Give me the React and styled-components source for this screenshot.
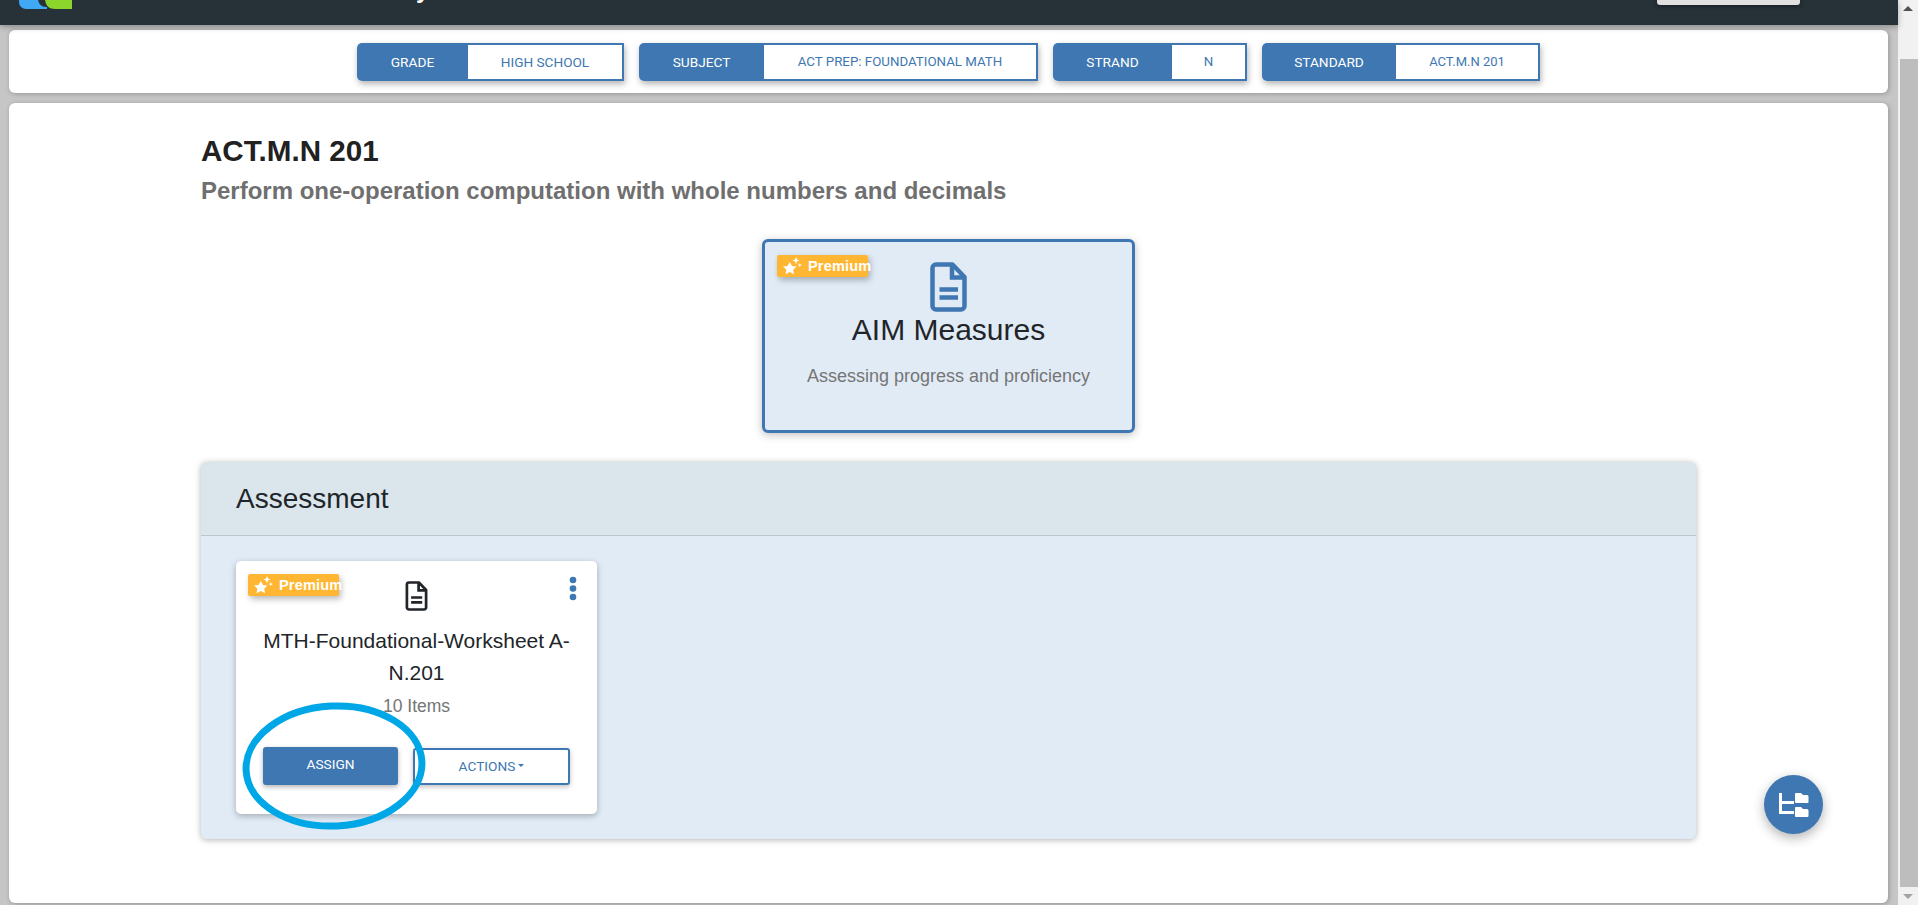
import React from "react";
import styled, { createGlobalStyle } from "styled-components";

const Global = createGlobalStyle`
  html, body { margin: 0; padding: 0; height: 905px; overflow: hidden; background: #c6c6c6; }
  * { box-sizing: border-box; }
  body { font-family: "Liberation Sans", Arial, sans-serif; color: #212529; }
`;

const BLUE = "#3e77b1";

const Shell = styled.div`display: flex; width: 1918px; height: 905px; overflow: hidden;`;
const Page = styled.div`display: flex; flex-direction: column; width: 1898px; height: 905px;`;

const Header = styled.header`
  display: flex; justify-content: space-between; height: 25px; flex: none; background: #263238;
  box-shadow: 0 2px 6px rgba(0,0,0,.3); position: relative; z-index: 2; overflow: hidden;
  padding: 0 98px 0 19px;
`;
const Brand = styled.div`display: flex; align-items: flex-start;`;
const Logo = styled.svg`display: block; width: 54px; height: 9px;`;
const BrandText = styled.span`
  font-size: 24px; line-height: 24px; font-weight: 700; color: #fff; margin: -22px 0 0 343px;
`;
const UserButton = styled.div`
  width: 143px; height: 5px; background: #e0e0e0; border-radius: 0 0 3px 3px;
  box-shadow: 0 1px 4px rgba(0,0,0,.5);
`;

const Content = styled.main`
  flex: 1; min-height: 0; display: flex; flex-direction: column; gap: 10px;
  padding: 5px 10px 2px 9px;
`;
const FilterCard = styled.section`
  flex: none; height: 63px; background: #fff; border-radius: 6px; display: flex; justify-content: center;
  gap: 15px; padding-top: 13px; box-shadow: 1px 1px 5px rgba(0,0,0,.25);
`;
const Filter = styled.div`
  display: flex; height: 38px; box-shadow: 1px 3px 6px rgba(0,0,0,.3); border-radius: 5px 0 0 5px;
  font-family: Roboto, sans-serif; font-weight: 400; text-transform: uppercase;
`;
const FilterLabel = styled.div`
  width: ${p => p.$w}px; background: ${BLUE}; color: #fff; border-radius: 5px 0 0 5px; font-size: 13.7px;
  display: flex; align-items: center; justify-content: center; padding-bottom: 1px;
`;
const FilterValue = styled.div`
  width: ${p => p.$w}px; background: #fff; color: ${BLUE}; border: 2px solid ${BLUE}; border-left: 0;
  font-size: ${p => p.$size}px; display: flex; align-items: center; justify-content: center; padding-bottom: 1px;
`;

const MainCard = styled.section`
  flex: 1; min-height: 0; position: relative; background: #fff; border-radius: 6px;
  padding: 30px 192px 0; box-shadow: 1px 1px 5px rgba(0,0,0,.25);
`;
const Title = styled.h1`margin: 0; font-size: 29.6px; line-height: 36px; font-weight: 700; color: #212121;`;
const Subtitle = styled.h2`
  margin: 7px 0 0; font-size: 24px; line-height: 30px; font-weight: 700; color: #6f6f6f;
`;
const FeatureRow = styled.div`display: flex; justify-content: center; margin-top: 33px;`;
const FeatureCard = styled.article`
  position: relative; width: 373px; height: 194px; background: #e1ebf5; border: 3px solid ${BLUE};
  border-radius: 6px; box-shadow: 0 2px 8px rgba(0,0,0,.25); display: flex; flex-direction: column;
  align-items: center; padding-top: 20px;
`;
const FeatureName = styled.div`font-size: 30px; line-height: 34px; color: #212529; margin-top: 1px;`;
const FeatureText = styled.div`font-size: 18px; line-height: 24px; color: #757575; margin-top: 17px;`;

const Badge = styled.div`
  position: absolute; left: ${p => p.$x}px; top: ${p => p.$y}px; width: 91px; height: 22px;
  background: #ffb733; border-radius: 2px; box-shadow: 2px 3px 6px rgba(0,0,0,.28);
  display: flex; align-items: center; padding-left: 6px; gap: 5px; white-space: nowrap;
  font-size: 14.5px; font-weight: 700; color: #fff; letter-spacing: .2px;
`;
const BadgeIcon = styled.svg`flex: none; width: 20px; height: 18px;`;

const Panel = styled.section`
  margin-top: 29px; height: 377px; background: #e1ebf5; border-radius: 6px;
  box-shadow: 0 1px 6px rgba(0,0,0,.3); display: flex; flex-direction: column;
`;
const PanelHead = styled.div`
  flex: none; height: 74px; background: #dae5ec; border-bottom: 1px solid #b9c5d1; border-radius: 6px 6px 0 0;
  padding: 0 35px; display: flex; align-items: center; font-size: 28px; color: #212529;
`;
const PanelBody = styled.div`padding: 25px 35px;`;

const ItemCard = styled.article`
  position: relative; width: 361px; height: 253px; background: #fff; border-radius: 5px;
  box-shadow: 0 2px 6px rgba(0,0,0,.28); padding: 20px 27px 0; display: flex; flex-direction: column; align-items: center;
`;
const ItemName = styled.div`
  width: 320px; margin-top: 14px; font-size: 21px; line-height: 32px; text-align: center; color: #212529;
`;
const ItemCount = styled.div`font-size: 17.5px; line-height: 24px; color: #757575; margin-top: 5px;`;
const ButtonRow = styled.div`display: flex; gap: 15px; margin-top: 29px; width: 100%; align-items: flex-end;`;
const AssignButton = styled.button`
  width: 135px; height: 38px; border: 0; border-radius: 3px; background: ${BLUE}; color: #fff; padding: 0 0 4px;
  font: 400 13.7px Roboto, sans-serif; box-shadow: 0 2px 5px rgba(0,0,0,.3);
`;
const ActionsButton = styled.button`
  width: 157px; height: 37px; border: 2px solid ${BLUE}; border-radius: 3px; background: #fff; color: ${BLUE}; padding: 0 0 2px;
  font: 400 13.7px Roboto, sans-serif; box-shadow: 0 2px 5px rgba(0,0,0,.25);
  display: flex; align-items: center; justify-content: center; gap: 3px;
`;
const Caret = styled.span`
  width: 0; height: 0; border-left: 3.5px solid transparent; border-right: 3.5px solid transparent;
  border-top: 3.5px solid ${BLUE};
`;
const Kebab = styled.svg`position: absolute; right: 20px; top: 15px; width: 8px; height: 25px;`;
const Annotation = styled.svg`position: absolute; left: 4px; top: 139px; width: 188px; height: 132px; pointer-events: none;`;

const Fab = styled.button`
  position: absolute; left: 1755px; top: 672px; width: 59px; height: 59px; border: 0; border-radius: 50%;
  background: ${BLUE}; box-shadow: 0 4px 12px rgba(0,0,0,.3); display: flex; align-items: center; justify-content: center; padding: 0;
`;

const Scrollbar = styled.aside`
  position: relative; width: 20px; height: 905px; background: #f1f1f1; display: flex; flex-direction: column; align-items: center;
`;
const ArrowUp = styled.span`
  margin-top: 6px; width: 0; height: 0; border-left: 5px solid transparent; border-right: 5px solid transparent;
  border-bottom: 5px solid #505050;
`;
const Thumb = styled.div`margin: 48px 0 0 2px; width: 18px; height: 828px; background: #bdbdbd;`;
const ArrowDown = styled.span`
  margin-top: 7px; width: 0; height: 0; border-left: 5px solid transparent; border-right: 5px solid transparent;
  border-top: 5px solid #a3a3a3;
`;

const DocIcon = ({ w, h, color, stroke }) => (
  <svg width={w} height={h} viewBox="0 0 37 50" style={{ display: "block", flex: "none" }}>
    <path d="M6 2.5h16.5L34.5 15v29a3.5 3.5 0 0 1-3.5 3.5H6A3.5 3.5 0 0 1 2.5 44V6A3.5 3.5 0 0 1 6 2.5z" fill="none" stroke={color} strokeWidth={stroke} strokeLinejoin="round" />
    <path d="M22 3v12.5h12" fill="none" stroke={color} strokeWidth={stroke} />
    <path d="M9.5 27.5h18.5M9.5 35.5h18.5" stroke={color} strokeWidth={stroke} />
  </svg>
);

const Sparkle = () => (
  <BadgeIcon viewBox="0 0 20 18" fill="#fff">
    <path d="M6.800 5l2.200 4 4.500.6-3.300 3.100.9 4.500-4.300-2.200-4.300 2.200.9-4.500L.1 9.600 4.600 9z" />
    <path d="M13 0l1 2.600 2.600 1-2.600 1-1 2.600-1-2.600-2.600-1 2.600-1zM16.800 6l.6 1.500 1.500.6-1.500.6-.6 1.500-.6-1.500-1.500-.6 1.500-.6z" />
  </BadgeIcon>
);

const filters = [
  ["Grade", 111, "High School", 156, 13.6],
  ["Subject", 125, "ACT Prep: Foundational Math", 274, 13.3],
  ["Strand", 119, "N", 75, 13.3],
  ["Standard", 134, "ACT.M.N 201", 144, 13],
];

export default function App() {
  return (
    <Shell>
      <Global />
      <Page>
        <Header>
          <Brand>
            <Logo viewBox="0 0 54 9">
              <path d="M0 0h28v9H7a7 7 0 0 1-7-7z" fill="#3fa9f5" />
              <circle cx="27" cy="-1" r="8" fill="#263238" />
              <path d="M26 0h27v9H36c-6 0-9-3-10-9z" fill="#8cd62c" />
            </Logo>
            <BrandText>y</BrandText>
          </Brand>
          <UserButton />
        </Header>
        <Content>
          <FilterCard>
            {filters.map(([l, lw, v, vw, size]) => (
              <Filter key={l}>
                <FilterLabel $w={lw}>{l}</FilterLabel>
                <FilterValue $w={vw} $size={size}>{v}</FilterValue>
              </Filter>
            ))}
          </FilterCard>
          <MainCard>
            <Title>ACT.M.N 201</Title>
            <Subtitle>Perform one-operation computation with whole numbers and decimals</Subtitle>
            <FeatureRow>
              <FeatureCard>
                <Badge $x={12} $y={13}><Sparkle />Premium</Badge>
                <DocIcon w={37} h={50} color={BLUE} stroke={4.5} />
                <FeatureName>AIM Measures</FeatureName>
                <FeatureText>Assessing progress and proficiency</FeatureText>
              </FeatureCard>
            </FeatureRow>
            <Panel>
              <PanelHead>Assessment</PanelHead>
              <PanelBody>
                <ItemCard>
                  <Badge $x={12} $y={13}><Sparkle />Premium</Badge>
                  <DocIcon w={23} h={30} color="#212529" stroke={4.5} />
                  <Kebab viewBox="0 0 8 25" fill={BLUE}>
                    <circle cx="4" cy="4" r="3.3" />
                    <circle cx="4" cy="12.5" r="3.3" />
                    <circle cx="4" cy="21" r="3.3" />
                  </Kebab>
                  <ItemName>MTH-Foundational-Worksheet A-N.201</ItemName>
                  <ItemCount>10 Items</ItemCount>
                  <ButtonRow>
                    <AssignButton>ASSIGN</AssignButton>
                    <ActionsButton>ACTIONS<Caret /></ActionsButton>
                  </ButtonRow>
                  <Annotation viewBox="0 0 188 132">
                    <ellipse cx="94" cy="66" rx="88" ry="60" transform="rotate(-3 94 66)" fill="none" stroke="#00a7e7" strokeWidth="7" />
                  </Annotation>
                </ItemCard>
              </PanelBody>
            </Panel>
            <Fab aria-label="Folders">
              <svg width="30" height="26" viewBox="0 0 30 26" fill="#fff">
                <path d="M0 1h3v8h12v3H3v7h12v3H0z" />
                <path d="M16 2a1 1 0 0 1 1-1h5l2 2h4a1.500 1.500 0 0 1 1.500 1.500V10a1 1 0 0 1-1 1H17a1 1 0 0 1-1-1z" />
                <path d="M16 16a1 1 0 0 1 1-1h5l2 2h4a1.500 1.500 0 0 1 1.500 1.500V24a1 1 0 0 1-1 1H17a1 1 0 0 1-1-1z" />
              </svg>
            </Fab>
          </MainCard>
        </Content>
      </Page>
      <Scrollbar>
        <ArrowUp />
        <Thumb />
        <ArrowDown />
      </Scrollbar>
    </Shell>
  );
}
